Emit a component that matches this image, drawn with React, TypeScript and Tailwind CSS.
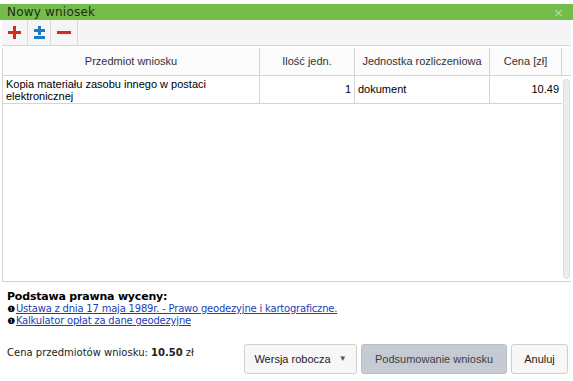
import React from 'react';

const rows = [
    { name: 'Kopia materiału zasobu innego w postaci elektronicznej', qty: 1, unit: 'dokument', price: '10.49' },
];

const App: React.FC = () => {
    return (
        <div className="w-[573px] h-[381px] bg-white overflow-hidden flex flex-col pt-[4px] text-[#222]" style={{ fontFamily: '"DejaVu Sans", Verdana, sans-serif' }}>
            {/* title bar */}
            <div className="h-[16px] bg-[#74bc4c] flex items-center justify-between px-[7px]">
                <span className="text-[12px] leading-none text-[#1e2a17] tracking-[0.2px]">Nowy wniosek</span>
                <span className="text-[13px] leading-none text-[#b9dca6] mr-[2px]">×</span>
            </div>

            {/* toolbar */}
            <div className="h-[26px] bg-[#f5f5f5] border-b border-[#d9d9d9] flex items-stretch mx-[2px]">
                <button className="w-[26px] flex items-center justify-center border-r border-[#dadada]">
                    <svg width="13" height="13" viewBox="0 0 13 13">
                        <rect x="5" y="0" width="3" height="13" fill="#d42b1e" />
                        <rect x="0" y="5" width="13" height="3" fill="#d42b1e" />
                    </svg>
                </button>
                <button className="w-[23px] flex items-center justify-center border-r border-[#dadada]">
                    <svg width="11" height="13" viewBox="0 0 11 13">
                        <rect x="4" y="0" width="3" height="9" fill="#1d7cc4" />
                        <rect x="0" y="3" width="11" height="3" fill="#1d7cc4" />
                        <rect x="0" y="10" width="11" height="3" fill="#1d7cc4" />
                    </svg>
                </button>
                <button className="w-[27px] flex items-center justify-center border-r border-[#dadada]">
                    <span className="block w-[14px] h-[3px] bg-[#d42b1e]"></span>
                </button>
            </div>

            {/* table */}
            <div className="mt-[2px] mx-[2px] h-[234px] border-l border-b border-[#d4d4d4] flex flex-col text-[11px]" style={{ fontFamily: '"Liberation Sans", Arial, sans-serif' }}>
                <div className="grid grid-cols-[257px_95px_135px_72px_1fr] h-[28px] bg-[#fbfbfb] border-b border-[#d4d4d4] text-[#333]">
                    <div className="flex items-center justify-center border-r border-[#d4d4d4]">Przedmiot wniosku</div>
                    <div className="flex items-center justify-center border-r border-[#d4d4d4]">Ilość jedn.</div>
                    <div className="flex items-center justify-center border-r border-[#d4d4d4]">Jednostka rozliczeniowa</div>
                    <div className="flex items-center justify-center border-r border-[#d4d4d4]">Cena [zł]</div>
                    <div></div>
                </div>
                <div className="flex flex-1 min-h-0">
                    <div className="flex-1">
                        {rows.map((r) => (
                            <div key={r.name} className="grid grid-cols-[257px_95px_135px_72px] h-[28px] border-b border-[#d4d4d4] text-black">
                                <div className="px-[3px] pt-[2px] leading-[12px] border-r border-[#d4d4d4]">{r.name}</div>
                                <div className="flex items-center justify-end px-[3px] border-r border-[#d4d4d4]">{r.qty}</div>
                                <div className="flex items-center px-[3px] border-r border-[#d4d4d4]">{r.unit}</div>
                                <div className="flex items-center justify-end px-[3px]">{r.price}</div>
                            </div>
                        ))}
                    </div>
                    <div className="w-[10px] pt-[3px] pb-[2px] flex justify-center">
                        <div className="w-[7px] h-full rounded-full bg-[#ececec] border border-[#dcdcdc]"></div>
                    </div>
                </div>
            </div>

            {/* footer */}
            <div className="px-[7px] pt-[9px] text-[10px] leading-[12px] tracking-[-0.2px]">
                <div className="font-bold text-[11px] text-black">Podstawa prawna wyceny:</div>
                <div className="flex items-center">
                    <span className="text-black text-[9px] mr-[1px]">❶</span>
                    <a href="#" className="text-[#1a3fb5] underline">Ustawa z dnia 17 maja 1989r. - Prawo geodezyjne i kartograficzne.</a>
                </div>
                <div className="flex items-center">
                    <span className="text-black text-[9px] mr-[1px]">❶</span>
                    <a href="#" className="text-[#1a3fb5] underline">Kalkulator opłat za dane geodezyjne</a>
                </div>
            </div>

            <div className="flex items-center justify-between pl-[7px] pr-[5px] mt-[17px]">
                <div className="text-[10px] text-[#222] -mt-[14px]">
                    Cena przedmiotów wniosku: <span className="font-bold">10.50</span> zł
                </div>
                <div className="flex gap-[4px] text-[11px]" style={{ fontFamily: '"Liberation Sans", Arial, sans-serif' }}>
                    <button className="h-[30px] w-[113px] rounded-[3px] border border-[#cfcfcf] bg-[#f7f7f7] flex items-center justify-center gap-[8px] text-[#222]">
                        Wersja robocza <span className="text-[8px] text-[#555]">▼</span>
                    </button>
                    <button className="h-[30px] w-[146px] rounded-[3px] border border-[#b8bec8] bg-[#c5cad3] text-[#3b3f45]">Podsumowanie wniosku</button>
                    <button className="h-[30px] w-[57px] rounded-[3px] border border-[#cfcfcf] bg-[#f7f7f7] text-[#222]">Anuluj</button>
                </div>
            </div>
        </div>
    );
};

export default App;
